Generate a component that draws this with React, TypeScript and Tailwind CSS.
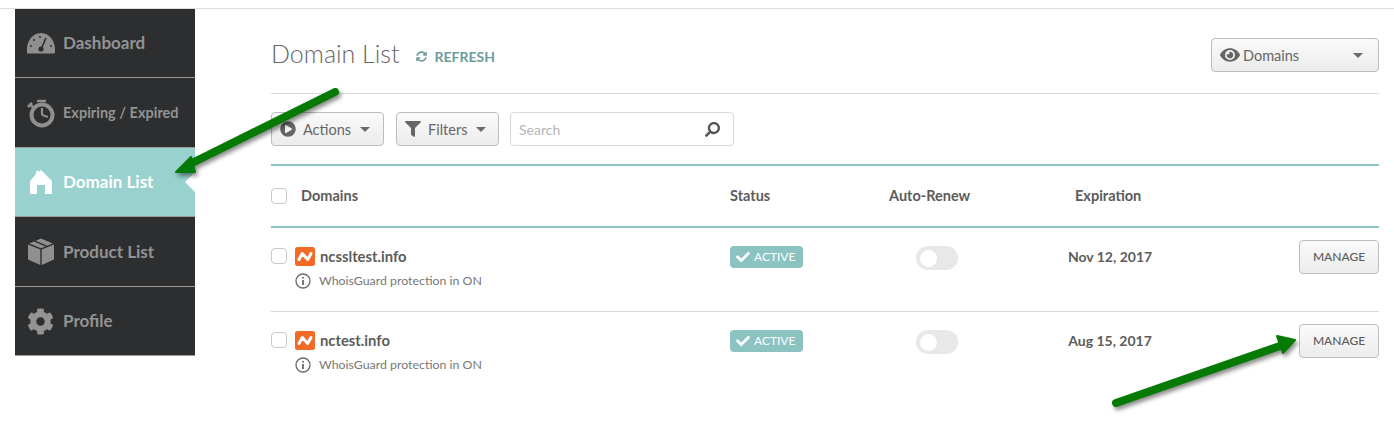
import { FaCheck, FaCog, FaEye, FaFilter, FaPlayCircle, FaSearch, FaSyncAlt } from "react-icons/fa";

const font = "font-['Lato','Liberation_Sans',sans-serif]";

const GaugeIcon = () => (
  <svg width="30" height="22" viewBox="0 0 30 22">
    <path d="M1 20.5C0 10 6 1 15 1s15 9 14 19.5c0 .6-.5 1-1 1H2c-.5 0-1-.4-1-1z" fill="#8f8f8f" />
    <path d="M20 6l-4.2 9.5" stroke="#2d2e30" strokeWidth="1.6" />
    <circle cx="15" cy="17" r="2.6" fill="#2d2e30" />
    <circle cx="5" cy="14" r="1" fill="#2d2e30" />
    <circle cx="8" cy="8" r="1" fill="#2d2e30" />
    <circle cx="14" cy="5" r="1" fill="#2d2e30" />
    <circle cx="25" cy="14" r="1" fill="#2d2e30" />
  </svg>
);

const StopwatchIcon = () => (
  <svg width="28" height="30" viewBox="0 0 28 30">
    <circle cx="15" cy="17" r="10.5" fill="none" stroke="#8f8f8f" strokeWidth="4" />
    <path d="M15 17V10M15 17l6 2" stroke="#8f8f8f" strokeWidth="2.2" fill="none" />
    <path d="M10 3h9" stroke="#8f8f8f" strokeWidth="2.4" />
    <path d="M2.5 5.5l4.5 5M1 9l4-4" stroke="#8f8f8f" strokeWidth="2.6" />
  </svg>
);

const HomeIcon = () => (
  <svg width="22" height="24" viewBox="0 0 22 24">
    <path d="M0 11L6 4V1h3v1l2-2 11 11v13h-7v-9H7v9H0z" fill="#fff" />
  </svg>
);

const BoxIcon = () => (
  <svg width="26" height="27" viewBox="0 0 26 27">
    <path d="M12.3 11.5v15.5L0 21.5V6.5z" fill="#8f8f8f" />
    <path d="M13.7 11.5v15.5L26 21.5V6.5z" fill="#8f8f8f" />
    <path d="M13 10.3L1.3 5.4 6 3.4 17.6 8.4zM19.3 7.7L7.7 2.7 13 .5l11.7 5z" fill="#8f8f8f" />
  </svg>
);

const Caret = () => (
  <span className="block h-0 w-0 border-x-[5px] border-t-[5px] border-x-transparent border-t-[#6b6b6b]" />
);

const NavItem = ({ icon, label, small, height }: { icon: React.ReactNode; label: string; small?: boolean; height: string }) => (
  <div className={`${height} flex items-center border-b border-[#9a9a9a] bg-[#2d2e30] text-[#939393]`}>
    <span className="flex w-[48px] shrink-0 justify-center pl-[3px]">{icon}</span>
    <span className={small ? "text-[14.5px] font-bold" : "text-[17px] font-bold"}>{label}</span>
  </div>
);

const ToolbarButton = ({ icon, label, width }: { icon: React.ReactNode; label: string; width: string }) => (
  <button className={`${width} flex h-[34px] items-center rounded border border-[#bdbdbd] bg-gradient-to-b from-[#fafafa] to-[#ececec] pl-[8px] text-[14.5px] text-[#666]`}>
    {icon}
    <span className="ml-[7px] mr-[9px] translate-y-[1px]">{label}</span>
    <Caret />
  </button>
);

const Checkbox = () => <span className="block h-[16px] w-[16px] rounded-[4px] border border-[#c9c9c9] bg-white" />;

const Logo = () => (
  <svg width="20" height="19" viewBox="0 0 20 19" className="shrink-0">
    <rect width="20" height="19" rx="2.5" fill="#f26a25" />
    <path d="M4 12.500L7.300 6.500 12.700 12.500 16 6.500" fill="none" stroke="#fff" strokeWidth="3" strokeLinecap="round" strokeLinejoin="round" />
  </svg>
);

const InfoIcon = () => (
  <svg width="16" height="16" viewBox="0 0 16 16" className="shrink-0">
    <circle cx="8" cy="8" r="7" fill="none" stroke="#6a6a6a" strokeWidth="1.300" />
    <circle cx="8" cy="4.700" r="1" fill="#6a6a6a" />
    <path d="M8 7v5" stroke="#6a6a6a" strokeWidth="1.800" />
  </svg>
);

const DomainRow = ({ name, date, last }: { name: string; date: string; last?: boolean }) => (
  <div className={`grid h-[84px] grid-cols-[459px_159px_151px_140px_1fr] items-start pt-[17px] ${last ? "" : "border-b border-[#d9d9d9]"}`}>
    <div>
      <div className="flex h-[22px] items-center">
        <Checkbox />
        <span className="ml-[8px]"><Logo /></span>
        <span className="ml-[5px] text-[14.8px] font-bold text-[#5c5c5c]">{name}</span>
      </div>
      <div className="mt-[5px] flex items-center pl-[24px]">
        <InfoIcon />
        <span className="ml-[8px] text-[12.35px] text-[#777]">WhoisGuard protection in ON</span>
      </div>
    </div>
    <div className="pt-[1px]">
      <span className="flex h-[22px] w-[73px] items-center rounded bg-[#8bc3c1] pl-[6px] text-[12px] text-white">
        <FaCheck size={14} />
        <span className="ml-[4px]">ACTIVE</span>
      </span>
    </div>
    <div className="pl-[27px] pt-[1px]">
      <span className="flex h-[24px] w-[42px] items-center rounded-full bg-[#e7e8ea] pl-[4px]">
        <span className="h-[17px] w-[17px] rounded-full bg-white" />
      </span>
    </div>
    <div className="flex h-[22px] items-center justify-center text-[14px] font-bold text-[#5c5c5c]">{date}</div>
    <div className="-mt-[5px] flex justify-end">
      <button className="h-[34px] w-[80px] rounded border border-[#bdbdbd] bg-gradient-to-b from-[#fafafa] to-[#ececec] text-[12px] font-medium text-[#5c5c5c]">
        MANAGE
      </button>
    </div>
  </div>
);

export default function App() {
  return (
    <div className={`${font} relative h-[424px] w-[1394px] overflow-hidden bg-white pt-[8px]`}>
      <div className="flex border-t border-[#dcdcdc]">
        {/* Sidebar */}
        <aside className="ml-[15px] w-[180px] shrink-0">
          <NavItem height="h-[69px]" icon={<GaugeIcon />} label="Dashboard" />
          <NavItem height="h-[70px]" icon={<StopwatchIcon />} label="Expiring / Expired" small />
          <div className="relative flex h-[69px] items-center border-b border-[#9a9a9a] bg-[#98d1ce] text-white">
            <span className="flex w-[48px] shrink-0 justify-center pl-[3px]"><HomeIcon /></span>
            <span className="text-[17px] font-bold">Domain List</span>
            <span className="absolute right-0 top-[24px] h-0 w-0 border-y-[10px] border-r-[10px] border-y-transparent border-r-white" />
          </div>
          <NavItem height="h-[70px]" icon={<BoxIcon />} label="Product List" />
          <NavItem height="h-[69px]" icon={<FaCog size={27} />} label="Profile" />
        </aside>

        {/* Main */}
        <main className="ml-[76px] w-[1108px] shrink-0">
          <div className="flex h-[85px] items-start justify-between border-b border-[#d9d9d9] pt-[29px]">
            <div className="flex items-center">
              <h1 className="text-[25px] font-light leading-[30px] text-[#666]">Domain List</h1>
              <span className="ml-[16px] mt-[7px] flex items-center text-[14px] font-bold text-[#6d9c9b]">
                <FaSyncAlt size={11} />
                <span className="ml-[8px]">REFRESH</span>
              </span>
            </div>
            <button className="flex h-[34px] w-[168px] items-center rounded border border-[#bdbdbd] bg-gradient-to-b from-[#fafafa] to-[#ececec] pl-[8px] text-[14.5px] text-[#666]">
              <FaEye size={20} className="text-[#666]" />
              <span className="ml-[3px] flex-1 translate-y-[1px] text-left">Domains</span>
              <span className="mr-[15px]"><Caret /></span>
            </button>
          </div>

          <div className="flex gap-[12px] pt-[18px]">
            <ToolbarButton width="w-[113px]" icon={<FaPlayCircle size={16} className="text-[#666]" />} label="Actions" />
            <ToolbarButton width="w-[103px]" icon={<FaFilter size={16} className="text-[#666]" />} label="Filters" />
            <div className="-ml-[1px] flex h-[34px] w-[224px] items-center justify-between rounded border border-[#d9d9d9] bg-white pl-[8px] pr-[13px] text-[14px] text-[#b5b5b5]">
              <span>Search</span>
              <FaSearch size={15} className="-scale-x-100 text-[#555]" />
            </div>
          </div>

          <div className="mt-[18px] grid h-[64px] grid-cols-[459px_159px_186px_1fr] items-center border-y-2 border-[#8bc3c1] text-[14.5px] font-bold text-[#5c5c5c]">
            <div className="flex items-center">
              <Checkbox />
              <span className="ml-[14px]">Domains</span>
            </div>
            <div>Status</div>
            <div>Auto-Renew</div>
            <div>Expiration</div>
          </div>

          <DomainRow name="ncssltest.info" date="Nov 12, 2017" />
          <DomainRow name="nctest.info" date="Aug 15, 2017" last />
        </main>
      </div>

      {/* Annotation arrows drawn over the screenshot */}
      <svg className="absolute left-0 top-0" width="1394" height="424" viewBox="0 0 1394 424">
        <g fill="#057a05" stroke="#057a05" strokeLinecap="round" strokeLinejoin="round" style={{ filter: "drop-shadow(2px 3px 2px rgba(0,0,0,.45))" }}>
          <path d="M335 92L190 164" strokeWidth="8" fill="none" />
          <path d="M176 172L191 157 195 172z" strokeWidth="2" />
          <path d="M1116 403L1280 346" strokeWidth="8" fill="none" />
          <path d="M1295 340L1277 336 1283 353z" strokeWidth="2" />
        </g>
      </svg>
    </div>
  );
}
